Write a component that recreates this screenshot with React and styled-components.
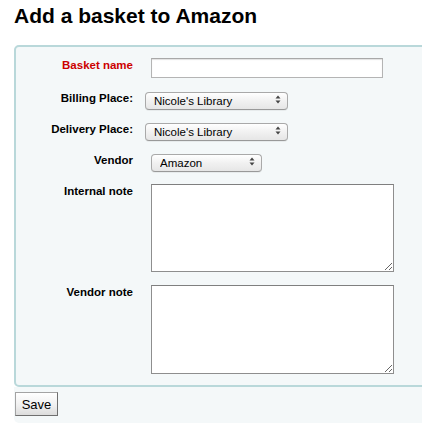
import React from "react";
import styled, {createGlobalStyle} from "styled-components";

const GlobalStyle = createGlobalStyle`
  body {
    margin: 0;
    background: #fff;
    overflow: hidden;
    font-family: "Liberation Sans", Arial, sans-serif;
    color: #000;
  }
`;

const places = ["Nicole's Library"];

const App = () => {
  return (
    <>
      <GlobalStyle />
      <Page>
        <Title>Add a basket to Amazon</Title>
        <form onSubmit={(ev) => ev.preventDefault()}>
          <Fieldset>
            <List>
              <Row>
                <Label $required>Basket name</Label>
                <TextInput type="text" />
              </Row>
              <Row>
                <Label>Billing Place:</Label>
                <Dropdown options={places} width={143} offset={12} />
              </Row>
              <Row>
                <Label>Delivery Place:</Label>
                <Dropdown options={places} width={143} offset={12} />
              </Row>
              <Row>
                <Label>Vendor</Label>
                <Dropdown options={["Amazon"]} width={111} offset={18} />
              </Row>
              <Row>
                <Label>Internal note</Label>
                <NoteArea $height={88} />
              </Row>
              <Row>
                <Label>Vendor note</Label>
                <NoteArea $height={89} />
              </Row>
            </List>
          </Fieldset>
          <Actions>
            <SaveButton type="submit">Save</SaveButton>
          </Actions>
        </form>
      </Page>
    </>
  );
};

const Dropdown = ({options, width, offset}) => {
  return (
    <SelectBox $width={width} $offset={offset}>
      <Select>
        {options.map((opt) => (
          <option key={opt}>{opt}</option>
        ))}
      </Select>
      <Arrows width="6" height="9" viewBox="0 0 6 9">
        <path d="M3 0.5 L5.5 3.5 L0.5 3.5 Z" fill="#444" />
        <path d="M3 8.5 L5.5 5.5 L0.5 5.5 Z" fill="#444" />
      </Arrows>
    </SelectBox>
  );
};

const Page = styled.div`
  width: 460px;
  padding: 4px 0 0 14px;
`;

const Title = styled.h1`
  margin: 0 0 17px;
  font-size: 21px;
  line-height: 24px;
  font-weight: bold;
`;

const Fieldset = styled.fieldset`
  margin: 0;
  padding: 11px 0;
  min-width: 0;
  border: 2px solid #b9d8da;
  border-radius: 5px;
  background: #f4f8f9;
`;

const List = styled.ol`
  list-style: none;
  margin: 0;
  padding: 0;
  display: flex;
  flex-direction: column;
  gap: 13px;
`;

const Row = styled.li`
  display: flex;
  align-items: flex-start;
`;

const Label = styled.label`
  width: 117px;
  flex-shrink: 0;
  text-align: right;
  font-size: 11.5px;
  line-height: 14px;
  font-weight: bold;
  color: ${(p) => (p.$required ? "#cc0000" : "#000")};
`;

const TextInput = styled.input`
  box-sizing: border-box;
  margin: 0 0 0 18px;
  width: 232px;
  height: 20px;
  padding: 2px 4px;
  border: 1px solid #b4b4b4;
  border-top-color: #a8a8a8;
  box-shadow: inset 0 1px 1px rgba(0, 0, 0, 0.12);
  background: #fff;
  font-family: "Liberation Sans", Arial, sans-serif;
  font-size: 12px;
  outline: none;
`;

const SelectBox = styled.div`
  position: relative;
  margin-left: ${(p) => p.$offset}px;
  width: ${(p) => p.$width}px;
  height: 18px;
`;

const Select = styled.select`
  appearance: none;
  box-sizing: border-box;
  width: 100%;
  height: 100%;
  margin: 0;
  padding: 0 16px 0 8px;
  border: 1px solid #a9a9a9;
  border-bottom-color: #999;
  border-radius: 4px;
  background: linear-gradient(#ffffff, #f1f1f1 50%, #e6e6e6);
  box-shadow: 0 1px 0 rgba(0, 0, 0, 0.05);
  font-family: "Liberation Sans", Arial, sans-serif;
  font-size: 11.5px;
  line-height: 16px;
  color: #000;
  outline: none;
`;

const Arrows = styled.svg`
  position: absolute;
  right: 7px;
  top: 4px;
  pointer-events: none;
`;

const NoteArea = styled.textarea`
  box-sizing: border-box;
  margin: 0 0 0 18px;
  width: 243px;
  height: ${(p) => p.$height}px;
  padding: 2px;
  border: 1px solid #8e8e8e;
  border-top-color: #7f7f7f;
  background: #fff;
  font-family: "Liberation Sans", Arial, sans-serif;
  font-size: 12px;
  outline: none;
`;

const Actions = styled.div`
  background: #f4f8f9;
  padding: 5px 0 7px 1px;
  border-bottom-left-radius: 5px;
`;

const SaveButton = styled.button`
  box-sizing: border-box;
  width: 43px;
  height: 24px;
  margin: 0;
  padding: 0;
  border: 1px solid #a3a3a3;
  border-right-color: #6f6f6f;
  border-bottom-color: #6f6f6f;
  border-radius: 0;
  background: linear-gradient(#ffffff, #f0f0f0 55%, #dcdcdc);
  font-family: "Liberation Sans", Arial, sans-serif;
  font-size: 13px;
  color: #000;
`;

export default App;
